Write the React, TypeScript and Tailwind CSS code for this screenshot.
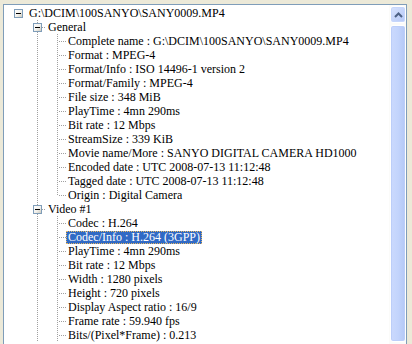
import React from "react";

type Row = { level: 0 | 1 | 2; text: string; last?: boolean; selected?: boolean };

const rows: Row[] = [
  { level: 0, text: "G:\\DCIM\\100SANYO\\SANY0009.MP4" },
  { level: 1, text: "General" },
  { level: 2, text: "Complete name : G:\\DCIM\\100SANYO\\SANY0009.MP4" },
  { level: 2, text: "Format : MPEG-4" },
  { level: 2, text: "Format/Info : ISO 14496-1 version 2" },
  { level: 2, text: "Format/Family : MPEG-4" },
  { level: 2, text: "File size : 348 MiB" },
  { level: 2, text: "PlayTime : 4mn 290ms" },
  { level: 2, text: "Bit rate : 12 Mbps" },
  { level: 2, text: "StreamSize : 339 KiB" },
  { level: 2, text: "Movie name/More : SANYO DIGITAL CAMERA HD1000" },
  { level: 2, text: "Encoded date : UTC 2008-07-13 11:12:48" },
  { level: 2, text: "Tagged date : UTC 2008-07-13 11:12:48" },
  { level: 2, text: "Origin : Digital Camera", last: true },
  { level: 1, text: "Video #1" },
  { level: 2, text: "Codec : H.264" },
  { level: 2, text: "Codec/Info : H.264 (3GPP)", selected: true },
  { level: 2, text: "PlayTime : 4mn 290ms" },
  { level: 2, text: "Bit rate : 12 Mbps" },
  { level: 2, text: "Width : 1280 pixels" },
  { level: 2, text: "Height : 720 pixels" },
  { level: 2, text: "Display Aspect ratio : 16/9" },
  { level: 2, text: "Frame rate : 59.940 fps" },
  { level: 2, text: "Bits/(Pixel*Frame) : 0.213" },
];

const DOT = "#A0A0A0";

function Box({ x, y, id }: { x: number; y: number; id: string }) {
  return (
    <g shapeRendering="crispEdges">
      <defs>
        <linearGradient id={id} x1="0" y1="0" x2="1" y2="1">
          <stop offset="0" stopColor="#FFFFFF" />
          <stop offset="0.55" stopColor="#F2F1EC" />
          <stop offset="1" stopColor="#C9C5B6" />
        </linearGradient>
      </defs>
      <rect x={x + 0.5} y={y + 0.5} width={8} height={8} fill={`url(#${id})`} stroke="#7F9DB9" />
      <line x1={x + 2} x2={x + 7} y1={y + 4.5} y2={y + 4.5} stroke="#000" />
    </g>
  );
}

function VLine({ x, y1, y2 }: { x: number; y1: number; y2: number }) {
  return (
    <line
      x1={x + 0.5}
      x2={x + 0.5}
      y1={y1}
      y2={y2}
      stroke={DOT}
      strokeDasharray="1 1"
      shapeRendering="crispEdges"
    />
  );
}

function HLine({ x1, x2, y }: { x1: number; x2: number; y: number }) {
  return (
    <line
      x1={x1}
      x2={x2}
      y1={y + 0.5}
      y2={y + 0.5}
      stroke={DOT}
      strokeDasharray="1 1"
      shapeRendering="crispEdges"
    />
  );
}

function Glyph({ row, idx }: { row: Row; idx: number }) {
  if (row.level === 0) {
    return (
      <svg width={23} height={14} className="shrink-0 block">
        <Box x={10} y={3} id={`b${idx}`} />
      </svg>
    );
  }
  if (row.level === 1) {
    return (
      <svg width={42} height={14} className="shrink-0 block">
        <VLine x={33} y1={0} y2={3} />
        <VLine x={33} y1={12} y2={14} />
        <HLine x1={38} x2={42} y={7} />
        <Box x={29} y={3} id={`b${idx}`} />
      </svg>
    );
  }
  return (
    <svg width={62} height={14} className="shrink-0 block">
      <VLine x={33} y1={0} y2={14} />
      <VLine x={53} y1={0} y2={row.last ? 8 : 14} />
      <HLine x1={55} x2={62} y={7} />
    </svg>
  );
}

function Scrollbar() {
  return (
    <div className="w-[17px] shrink-0 flex flex-col bg-[#FBFBF9] pt-[1px] pb-[2px]">
      <div className="h-[17px] w-[16px] ml-[1px] rounded-[3px] border border-white bg-gradient-to-br from-[#D8E3FD] to-[#B5C8F7] flex items-center justify-center shadow-[inset_0_0_0_1px_#C6D6FB]">
        <svg width="9" height="6" viewBox="0 0 9 6">
          <path d="M1 5 L4.5 1.5 L8 5" fill="none" stroke="#4D6185" strokeWidth="2" />
        </svg>
      </div>
      <div className="mt-[2px] flex-1 w-[16px] ml-[1px] rounded-[3px] border border-white bg-gradient-to-r from-[#CBD9FD] via-[#C3D4FC] to-[#B4C8F6] shadow-[inset_0_0_0_1px_#BCCEF9]" />
    </div>
  );
}

export default function App() {
  return (
    <div
      className="w-[412px] h-[344px] bg-[#ECE9D8] pt-[4px] pl-[3px] pr-[5px] overflow-hidden"
      style={{ fontFamily: '"Liberation Serif", "Times New Roman", serif' }}
    >
      <div className="h-[340px] border-l border-t border-r border-[#7F9DB9] bg-white flex">
        <div className="flex-1 pt-[1px] overflow-hidden">
          {rows.map((r, i) => (
            <div key={i} className="h-[14px] flex items-start whitespace-nowrap">
              <Glyph row={r} idx={i} />
              <span
                className={
                  "mt-[1px] h-[13px] px-[2px] text-[12px] leading-[13px] " +
                  (r.selected
                    ? "bg-[#316AC5] text-white outline outline-1 outline-dotted outline-[#E8B860] -outline-offset-1"
                    : "text-black")
                }
              >
                {r.text}
              </span>
            </div>
          ))}
        </div>
        <Scrollbar />
      </div>
    </div>
  );
}
